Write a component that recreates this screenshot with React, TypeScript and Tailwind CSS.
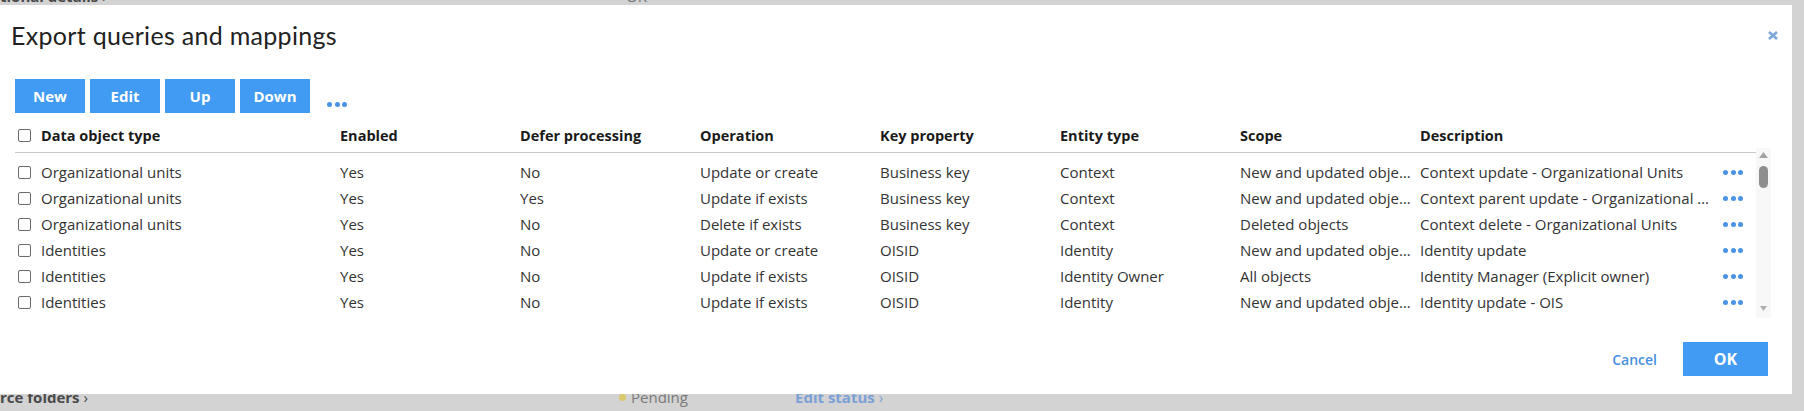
import React from "react";

const rows = [
  ["Organizational units", "Yes", "No", "Update or create", "Business key", "Context", "New and updated objects", "Context update - Organizational Units"],
  ["Organizational units", "Yes", "Yes", "Update if exists", "Business key", "Context", "New and updated objects", "Context parent update - Organizational Units"],
  ["Organizational units", "Yes", "No", "Delete if exists", "Business key", "Context", "Deleted objects", "Context delete - Organizational Units"],
  ["Identities", "Yes", "No", "Update or create", "OISID", "Identity", "New and updated objects", "Identity update"],
  ["Identities", "Yes", "No", "Update if exists", "OISID", "Identity Owner", "All objects", "Identity Manager (Explicit owner)"],
  ["Identities", "Yes", "No", "Update if exists", "OISID", "Identity", "New and updated objects", "Identity update - OIS"],
];

function Checkbox() {
  return <div className="w-[13px] h-[13px] shrink-0 rounded-[2px] border border-[#6b6b6b] bg-white" />;
}

function Dots() {
  return (
    <div className="flex items-center gap-[2.5px]">
      <div className="w-[5px] h-[5px] rounded-full bg-[#4a93e6]" />
      <div className="w-[5px] h-[5px] rounded-full bg-[#4a93e6]" />
      <div className="w-[5px] h-[5px] rounded-full bg-[#4a93e6]" />
    </div>
  );
}

export default function App() {
  return (
    <div className="w-[1804px] h-[411px] bg-[#d3d3d3] overflow-hidden flex flex-col font-['Open_Sans',sans-serif]">
      {/* top strip of underlying page */}
      <div className="h-[5px] overflow-hidden shrink-0">
        <div className="-mt-[14px] flex items-center text-[15px] leading-[20px]">
          <span className="w-[617px] font-bold text-[#4a4a4a]">
            tional details <span className="font-normal">›</span>
            <span className="text-[#e0606e]">*</span>
          </span>
          <span className="w-[6px] h-[6px] rounded-full bg-[#7aa868] mr-[3px]" />
          <span className="text-[#777]">OK</span>
        </div>
      </div>

      {/* dialog */}
      <div className="w-[1792px] h-[389px] bg-white flex flex-col pt-[15px] shrink-0">
        <div className="h-[30px] flex items-center justify-between pl-[11px] pr-[14px]">
          <span className="text-[25px] leading-[30px] text-[#222] font-['Lato',sans-serif] font-normal tracking-[0.3px]">
            Export queries and mappings
          </span>
          <svg width="10" height="9" viewBox="0 0 10 9">
            <path d="M1 1 L9 8 M9 1 L1 8" stroke="#7ea6d8" strokeWidth="2.6" strokeLinecap="butt" />
          </svg>
        </div>

        <div className="mt-[29px] pl-[15px] flex items-end">
          {["New", "Edit", "Up", "Down"].map((b) => (
            <div
              key={b}
              className="w-[70px] h-[34px] mr-[5px] bg-[#429bf2] text-white text-[15px] font-bold flex items-center justify-center"
            >
              {b}
            </div>
          ))}
          <div className="ml-[12px] mb-[6px]">
            <Dots />
          </div>
        </div>

        <div className="mt-[6px] pl-[15px] flex">
          <div className="w-[1741px]">
            <div className="h-[34px] border-b border-[#c8c8c8] flex items-center text-[14.5px] font-bold text-[#1a1a1a]">
              <div className="w-[325px] flex items-center pl-[3px] gap-[10px]">
                <Checkbox />
                <span>Data object type</span>
              </div>
              {["Enabled", "Defer processing", "Operation", "Key property", "Entity type", "Scope"].map((h) => (
                <div key={h} className="w-[180px]">
                  {h}
                </div>
              ))}
              <div className="w-[292px]">Description</div>
            </div>
            <div className="pt-[6px]">
              {rows.map((r, i) => (
                <div key={i} className="h-[26px] flex items-center text-[15px] text-[#333]">
                  <div className="w-[325px] flex items-center pl-[3px] gap-[10px]">
                    <Checkbox />
                    <span>{r[0]}</span>
                  </div>
                  <div className="w-[180px]">{r[1]}</div>
                  <div className="w-[180px]">{r[2]}</div>
                  <div className="w-[180px]">{r[3]}</div>
                  <div className="w-[180px]">{r[4]}</div>
                  <div className="w-[180px]">{r[5]}</div>
                  <div className="w-[180px] pr-[5px] whitespace-nowrap overflow-hidden text-ellipsis">{r[6]}</div>
                  <div className="w-[292px] whitespace-nowrap overflow-hidden text-ellipsis">{r[7]}</div>
                  <div className="pl-[11px]">
                    <Dots />
                  </div>
                </div>
              ))}
            </div>
          </div>
          <div className="mt-[29px] w-[15px] h-[170px] bg-[#f8f8f8] flex flex-col items-center pt-[4px] pb-[7px]">
            <svg width="9" height="6" viewBox="0 0 9 6">
              <path d="M4.5 0 L9 6 L0 6 Z" fill="#a3a3a3" />
            </svg>
            <div className="mt-[8px] w-[9px] h-[22px] rounded-full bg-[#8e8e8e]" />
            <div className="flex-1" />
            <svg width="7" height="5" viewBox="0 0 7 5">
              <path d="M0 0 L7 0 L3.5 5 Z" fill="#b0b0b0" />
            </svg>
          </div>
        </div>

        <div className="mt-auto pb-[18px] pr-[24px] flex justify-end items-center gap-[26px]">
          <span className="text-[14px] font-semibold text-[#4a90e2]">Cancel</span>
          <div className="w-[85px] h-[34px] bg-[#429bf2] text-white text-[16px] font-bold flex items-center justify-center">
            OK
          </div>
        </div>
      </div>

      {/* bottom strip of underlying page */}
      <div className="h-[17px] overflow-hidden shrink-0">
        <div className="-mt-[7px] flex items-center text-[15px] leading-[20px]">
          <span className="w-[619px] font-bold text-[#4a4a4a]">
            rce folders <span className="font-normal">›</span>
          </span>
          <span className="w-[7px] h-[7px] rounded-full bg-[#d8c96c] mr-[5px]" />
          <span className="w-[164px] text-[#7a7a7a]">Pending</span>
          <span className="font-bold text-[#7ba0d6]">
            Edit status <span className="font-normal">›</span>
          </span>
        </div>
      </div>
    </div>
  );
}
